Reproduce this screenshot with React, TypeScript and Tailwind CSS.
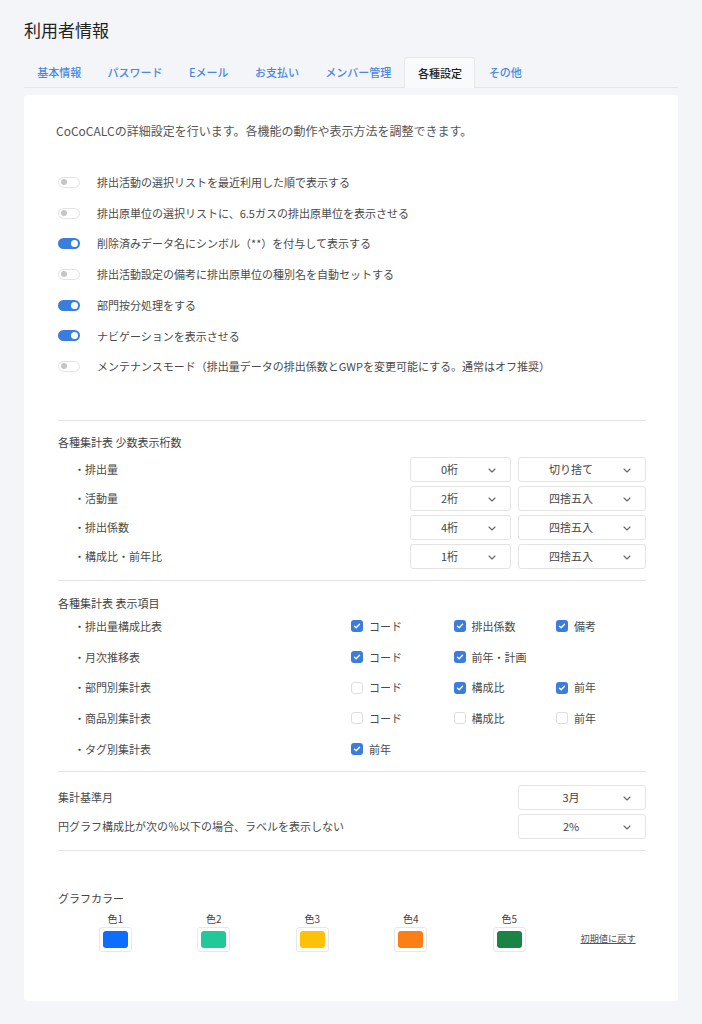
import React from "react";

const tabs = ["基本情報", "パスワード", "Eメール", "お支払い", "メンバー管理", "各種設定", "その他"];

const toggles: { label: string; on: boolean }[] = [
  { label: "排出活動の選択リストを最近利用した順で表示する", on: false },
  { label: "排出原単位の選択リストに、6.5ガスの排出原単位を表示させる", on: false },
  { label: "削除済みデータ名にシンボル（**）を付与して表示する", on: true },
  { label: "排出活動設定の備考に排出原単位の種別名を自動セットする", on: false },
  { label: "部門按分処理をする", on: true },
  { label: "ナビゲーションを表示させる", on: true },
  { label: "メンテナンスモード（排出量データの排出係数とGWPを変更可能にする。通常はオフ推奨）", on: false },
];

const digits = [
  { label: "・排出量", digit: "0桁", round: "切り捨て" },
  { label: "・活動量", digit: "2桁", round: "四捨五入" },
  { label: "・排出係数", digit: "4桁", round: "四捨五入" },
  { label: "・構成比・前年比", digit: "1桁", round: "四捨五入" },
];

type Check = { label: string; on: boolean } | null;

const items: { label: string; checks: Check[] }[] = [
  {
    label: "・排出量構成比表",
    checks: [
      { label: "コード", on: true },
      { label: "排出係数", on: true },
      { label: "備考", on: true },
    ],
  },
  {
    label: "・月次推移表",
    checks: [
      { label: "コード", on: true },
      { label: "前年・計画", on: true },
      null,
    ],
  },
  {
    label: "・部門別集計表",
    checks: [
      { label: "コード", on: false },
      { label: "構成比", on: true },
      { label: "前年", on: true },
    ],
  },
  {
    label: "・商品別集計表",
    checks: [
      { label: "コード", on: false },
      { label: "構成比", on: false },
      { label: "前年", on: false },
    ],
  },
  {
    label: "・タグ別集計表",
    checks: [{ label: "前年", on: true }, null, null],
  },
];

const colors = [
  { label: "色1", value: "bg-[#0d6efd]" },
  { label: "色2", value: "bg-[#20c997]" },
  { label: "色3", value: "bg-[#ffc107]" },
  { label: "色4", value: "bg-[#fd7e14]" },
  { label: "色5", value: "bg-[#198443]" },
];

function Toggle({ on }: { on: boolean }) {
  return on ? (
    <span className="flex h-[11px] w-[22px] items-center justify-end rounded-full bg-[#3b7ddd] px-[2px]">
      <span className="h-[7px] w-[7px] rounded-full bg-white" />
    </span>
  ) : (
    <span className="flex h-[11px] w-[22px] items-center rounded-full border border-[#e3e3e3] bg-white px-[2px]">
      <span className="h-[6px] w-[6px] rounded-full bg-[#c6c6c6]" />
    </span>
  );
}

function Checkbox({ on }: { on: boolean }) {
  return on ? (
    <span className="flex h-[12px] w-[12px] shrink-0 items-center justify-center rounded-[3px] bg-[#3b7ddd]">
      <svg width="8" height="8" viewBox="0 0 8 8" fill="none">
        <path d="M1.5 4.2 3.2 5.8 6.5 2.3" stroke="white" strokeWidth="1.4" strokeLinecap="round" strokeLinejoin="round" />
      </svg>
    </span>
  ) : (
    <span className="h-[12px] w-[12px] shrink-0 rounded-[3px] border border-[#dedede] bg-white" />
  );
}

function Select({ value, width }: { value: string; width: string }) {
  return (
    <div
      className={`relative flex h-[25px] items-center justify-center rounded-[3px] border border-[#e4e4e4] bg-white pr-[22px] text-[11px] text-[#444] ${width}`}
    >
      <span>{value}</span>
      <svg
        className="absolute right-[14px] top-[10px]"
        width="8"
        height="5"
        viewBox="0 0 8 5"
        fill="none"
      >
        <path d="M1 1 4 4 7 1" stroke="#666" strokeWidth="1.1" strokeLinecap="round" strokeLinejoin="round" />
      </svg>
    </div>
  );
}

function Divider() {
  return <div className="h-px bg-[#e2e3e6]" />;
}

export default function App() {
  return (
    <div
      className="min-h-[1024px] bg-[#f4f5f9] px-6 pt-[18px] pb-6 text-[#444]"
      style={{ fontFamily: '"Noto Sans CJK JP", "Noto Sans", sans-serif' }}
    >
      <h1 className="text-[17px] leading-6 text-[#222]">利用者情報</h1>

      <div className="mt-[15px] flex border-b border-[#e3e5ea]">
        {tabs.map((t) =>
          t === "各種設定" ? (
            <div
              key={t}
              className="-mb-px flex h-[31px] items-center rounded-t-[3px] border border-b-0 border-[#e6e7eb] bg-[#f9fafb] px-[12.5px] text-[11px] font-medium text-[#222]"
            >
              {t}
            </div>
          ) : (
            <div
              key={t}
              className="flex h-[30px] items-center px-[13.2px] text-[11px] font-medium text-[#4a88e0]"
            >
              {t}
            </div>
          ),
        )}
      </div>

      <div className="mt-[7px] rounded-[4px] bg-white px-8 pt-[27px] pb-[49px]">
        <p className="text-[12px] leading-[18px] text-[#555]">
          CoCoCALCの詳細設定を行います。各機能の動作や表示方法を調整できます。
        </p>

        <div className="mt-[27px] flex flex-col pl-[2px]">
          {toggles.map((t) => (
            <div key={t.label} className="flex h-[30.7px] items-center gap-[17px]">
              <Toggle on={t.on} />
              <span className="text-[11px] text-[#4a4a4a]">{t.label}</span>
            </div>
          ))}
        </div>

        <div className="mt-[38px] pl-[2px]">
          <Divider />

          <div className="pt-[13px]">
            <div className="text-[11px] leading-4 text-[#444]">各種集計表 少数表示桁数</div>
            <div className="mt-[7px] flex flex-col gap-[4px]">
              {digits.map((d) => (
                <div key={d.label} className="flex items-center">
                  <span className="ml-4 flex-1 text-[11px] text-[#4a4a4a]">{d.label}</span>
                  <div className="flex gap-[7px]">
                    <Select value={d.digit} width="w-[101px]" />
                    <Select value={d.round} width="w-[128px]" />
                  </div>
                </div>
              ))}
            </div>
          </div>

          <div className="mt-[11px]">
            <Divider />
          </div>

          <div className="pt-[14px]">
            <div className="text-[11px] leading-4 text-[#444]">各種集計表 表示項目</div>
            <div className="flex flex-col">
              {items.map((row) => (
                <div key={row.label} className="flex h-[30.75px] items-center text-[11px] text-[#4a4a4a]">
                  <span className="ml-4 w-[277px] shrink-0">{row.label}</span>
                  {row.checks.map((c, i) => (
                    <div key={i} className="flex w-[102.5px] shrink-0 items-center gap-[6px]">
                      {c ? (
                        <>
                          <Checkbox on={c.on} />
                          <span>{c.label}</span>
                        </>
                      ) : null}
                    </div>
                  ))}
                </div>
              ))}
            </div>
          </div>

          <div className="mt-[6px]">
            <Divider />
          </div>

          <div className="flex flex-col gap-[4px] pt-[13px]">
            <div className="flex items-center justify-between text-[11px] text-[#4a4a4a]">
              <span>集計基準月</span>
              <Select value="3月" width="w-[128px]" />
            </div>
            <div className="flex items-center justify-between text-[11px] text-[#4a4a4a]">
              <span>円グラフ構成比が次の％以下の場合、ラベルを表示しない</span>
              <Select value="2%" width="w-[128px]" />
            </div>
          </div>

          <div className="mt-[11px]">
            <Divider />
          </div>

          <div className="pt-[39px]">
            <div className="text-[11px] leading-4 text-[#444]">グラフカラー</div>
            <div className="mt-[6px] ml-2 flex items-end">
              {colors.map((c) => (
                <div key={c.label} className="flex w-[98.5px] flex-col items-center">
                  <span className="text-[10px] leading-[14px] text-[#444]">{c.label}</span>
                  <div className="mt-[1px] flex h-[25px] w-[33px] items-center justify-center rounded-[3px] border border-[#e8e8e8] bg-white">
                    <span className={`h-[17px] w-[25px] rounded-[3px] ${c.value}`} />
                  </div>
                </div>
              ))}
              <span className="mb-[6px] ml-[22px] text-[9.2px] text-[#555] underline">初期値に戻す</span>
            </div>
          </div>
        </div>
      </div>
    </div>
  );
}
